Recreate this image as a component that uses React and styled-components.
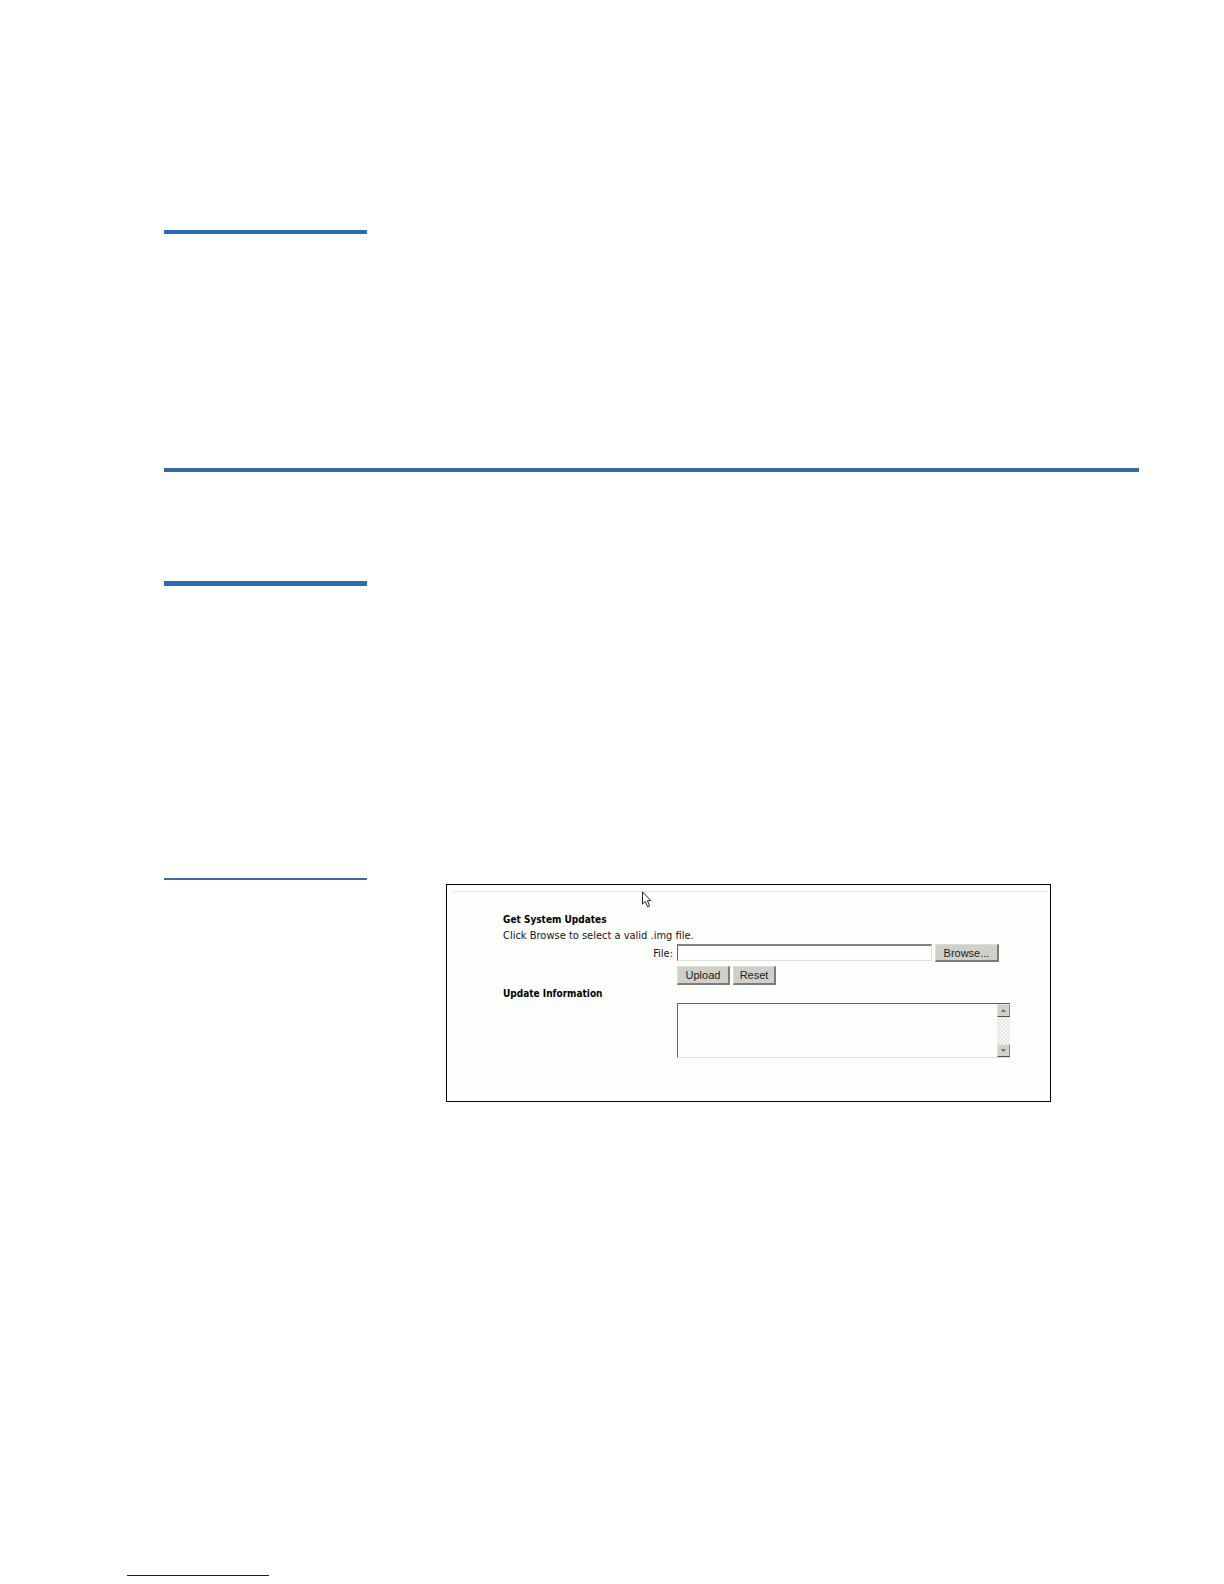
import React from "react";
import styled, { createGlobalStyle } from "styled-components";

const GlobalStyle = createGlobalStyle`
  *, *::before, *::after { box-sizing: border-box; }
  body { margin: 0; background: #ffffff; }
`;

const Page = styled.div`
  display: flex;
  flex-direction: column;
  padding: 230px 85px 8px 127px;
`;

const Content = styled.main`
  display: flex;
  flex-direction: column;
  margin-left: 37px;
`;

const Rule = styled.hr`
  width: ${(p) => (p.$short ? "203px" : "100%")};
  height: ${(p) => p.$weight}px;
  margin: 0 0 ${(p) => p.$after || 0}px;
  border: 0;
  background: ${(p) => p.$color || "#2a6bbd"};
`;

const FooterRule = styled(Rule)`
  width: 142px;
`;

const Section = styled.section`
  display: grid;
  grid-template-columns: 203px minmax(0, 605px);
  column-gap: 79px;
  align-items: start;
  margin-bottom: 473px;
`;

const Panel = styled.form`
  position: relative;
  margin-top: 6px;
  padding: 6px 2px 43px 6px;
  border: 1px solid #000000;
  background: #fdfffc;
  color: #1a1024;
  font: 11px/16px "DejaVu Sans Condensed", "DejaVu Sans", sans-serif;
`;

const PanelLine = styled.hr`
  height: 1px;
  margin: 0 0 19px;
  border: 0;
  background: #e6e8e6;
`;

const Fields = styled.div`
  display: flex;
  flex-direction: column;
  padding-left: 50px;
`;

const Heading = styled.h2`
  margin: 0;
  color: #000000;
  font: bold 10px/18px "DejaVu Sans Condensed", "DejaVu Sans", sans-serif;
`;

const Hint = styled.p`
  margin: 0;
  line-height: 13px;
`;

const Row = styled.div`
  display: grid;
  grid-template-columns: 170px minmax(0, 1fr);
  column-gap: 4px;
  margin-top: ${(p) => p.$before || 0}px;
`;

const FieldLabel = styled.label`
  line-height: 20px;
  text-align: right;
`;

const Controls = styled.div`
  display: flex;
  grid-column: 2;
  align-items: flex-start;
  gap: 3px;
`;

const FileBox = styled.input`
  width: 255px;
  min-width: 0;
  height: 17px;
  padding: 0 2px;
  border: 1px solid #e0e2e0;
  border-top: 2px solid #808080;
  border-left: 1px solid #606060;
  border-radius: 0;
  background: #fdfffc;
  outline: none;
  font: inherit;
`;

const Button = styled.button`
  width: ${(p) => p.$width}px;
  height: ${(p) => p.$height}px;
  padding: 0;
  border: 1px solid #dcdcd8;
  border-right: 2px solid #7c7c7a;
  border-bottom: 2px solid #7c7c7a;
  border-radius: 0;
  background: #d0d0ca;
  color: #1c1c1c;
  font: 11px/14px "Liberation Sans", Arial, sans-serif;
`;

const InfoFrame = styled.div`
  display: flex;
  grid-column: 2;
  width: 333px;
  height: 55px;
  border-top: 1px solid #606060;
  border-left: 1px solid #606060;
  border-bottom: 1px solid #e0e2e0;
`;

const InfoBox = styled.textarea`
  flex: 1;
  min-width: 0;
  padding: 2px;
  border: 0;
  background: transparent;
  outline: none;
  overflow: hidden;
  resize: none;
  font: inherit;
`;

const ScrollTrack = styled.div`
  display: flex;
  flex-direction: column;
  justify-content: space-between;
  width: 13px;
  background: repeating-conic-gradient(#e6e6e2 0 25%, #f6f6f4 0 50%) 0 0 / 4px 4px;
`;

const ScrollButton = styled.button`
  display: flex;
  align-items: center;
  justify-content: center;
  width: 13px;
  height: 13px;
  padding: 0;
  border: 1px solid #e4e4e0;
  border-right-color: #8a8a88;
  border-bottom: 1px solid #505050;
  border-radius: 0;
  background: #d0d0ca;
`;

const Pointer = styled.svg`
  position: absolute;
  top: 6px;
  left: 195px;
  pointer-events: none;
`;

function Arrow({ down }) {
  return (
    <svg width="5" height="3" viewBox="0 0 5 3" aria-hidden="true">
      <path d={down ? "M0 0h5L2.5 3z" : "M0 3h5L2.5 0z"} fill="#70706e" />
    </svg>
  );
}

export default function App() {
  return (
    <>
      <GlobalStyle />
      <Page>
        <Content>
          <Rule $short $weight={4} $after={234} />
          <Rule $weight={4} $after={109} $color="#3069b0" />
          <Rule $short $weight={5} $after={292} />
          <Section>
            <Rule $short $weight={2} $color="#4566a6" />
            <Panel onSubmit={(e) => e.preventDefault()}>
              <PanelLine />
              <Fields>
                <Heading>Get System Updates</Heading>
                <Hint>Click Browse to select a valid .img file.</Hint>
                <Row $before={2}>
                  <FieldLabel htmlFor="file">File:</FieldLabel>
                  <Controls>
                    <FileBox id="file" type="text" />
                    <Button type="button" $width={64} $height={18}>Browse...</Button>
                  </Controls>
                </Row>
                <Row $before={2}>
                  <Controls>
                    <Button type="submit" $width={53} $height={19}>Upload</Button>
                    <Button type="reset" $width={43} $height={19}>Reset</Button>
                  </Controls>
                </Row>
                <Heading as="label" htmlFor="info">Update Information</Heading>
                <Row>
                  <InfoFrame>
                    <InfoBox id="info" />
                    <ScrollTrack>
                      <ScrollButton type="button" aria-label="Scroll up"><Arrow /></ScrollButton>
                      <ScrollButton type="button" aria-label="Scroll down"><Arrow down /></ScrollButton>
                    </ScrollTrack>
                  </InfoFrame>
                </Row>
              </Fields>
              <Pointer width="10" height="17" viewBox="0 0 10 17" aria-hidden="true">
                <path
                  d="M.5 .8V13L3.2 10.4L5.6 15.8L7.6 14.9L5.4 9.6H8.8Z"
                  fill="#ffffff"
                  stroke="#20202a"
                  strokeWidth="1"
                />
              </Pointer>
            </Panel>
          </Section>
        </Content>
        <FooterRule $weight={1} $color="#1a0d80" />
      </Page>
    </>
  );
}
